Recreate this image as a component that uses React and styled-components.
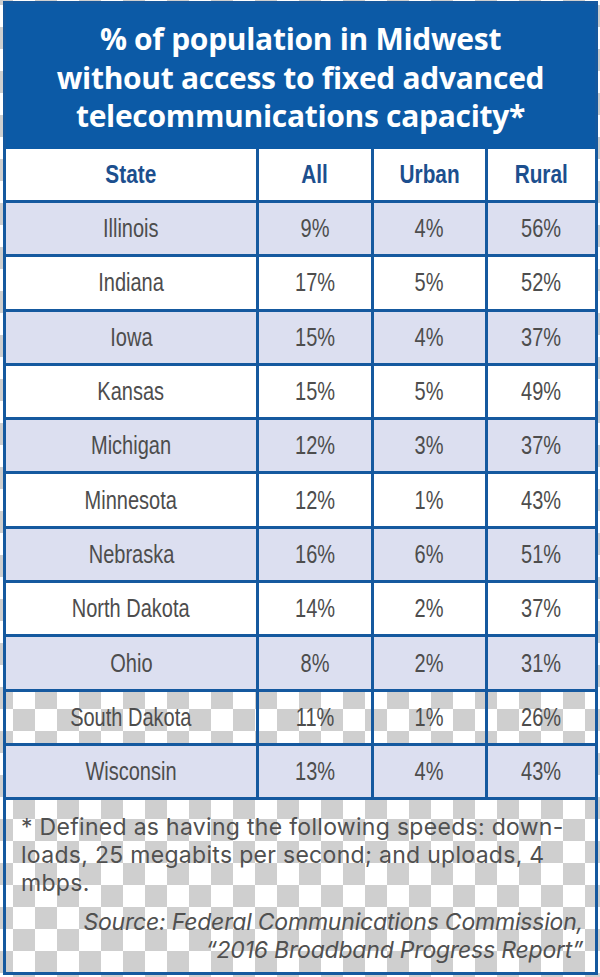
import React from 'react';
import styled, { createGlobalStyle, css } from 'styled-components';

/**************************************************
    DATA
**************************************************/
const rows = [
    { state: 'Illinois', all: '9%', urban: '4%', rural: '56%', tone: 'shade' },
    { state: 'Indiana', all: '17%', urban: '5%', rural: '52%', tone: 'plain' },
    { state: 'Iowa', all: '15%', urban: '4%', rural: '37%', tone: 'shade' },
    { state: 'Kansas', all: '15%', urban: '5%', rural: '49%', tone: 'plain' },
    { state: 'Michigan', all: '12%', urban: '3%', rural: '37%', tone: 'shade' },
    { state: 'Minnesota', all: '12%', urban: '1%', rural: '43%', tone: 'plain' },
    { state: 'Nebraska', all: '16%', urban: '6%', rural: '51%', tone: 'shade' },
    { state: 'North Dakota', all: '14%', urban: '2%', rural: '37%', tone: 'plain' },
    { state: 'Ohio', all: '8%', urban: '2%', rural: '31%', tone: 'shade' },
    { state: 'South Dakota', all: '11%', urban: '1%', rural: '26%', tone: 'clear' },
    { state: 'Wisconsin', all: '13%', urban: '4%', rural: '43%', tone: 'shade' },
];

const LINE = '#15599f';

/**************************************************
    APP
**************************************************/
export default function App() {
    return (
        <>
            <GlobalStyle />
            <Card>
                <Title>
                    % of population in Midwest<br />
                    without access to fixed advanced<br />
                    telecommunications capacity*
                </Title>
                <Row tone="plain">
                    <HeadCell><Label>State</Label></HeadCell>
                    <HeadCell><Label>All</Label></HeadCell>
                    <HeadCell><Label>Urban</Label></HeadCell>
                    <HeadCell><Label>Rural</Label></HeadCell>
                </Row>
                {rows.map(r => (
                    <Row key={r.state} tone={r.tone} $ruled>
                        <Cell><Label>{r.state}</Label></Cell>
                        <Cell><Label>{r.all}</Label></Cell>
                        <Cell><Label>{r.urban}</Label></Cell>
                        <Cell><Label>{r.rural}</Label></Cell>
                    </Row>
                ))}
                <Footer>
                    <Note>
                        * Defined as having the following speeds: down-<br />
                        loads, 25 megabits per second; and uploads, 4<br />
                        mbps.
                    </Note>
                    <Source>
                        Source: Federal Communications Commission,<br />
                        “2016 Broadband Progress Report”
                    </Source>
                </Footer>
            </Card>
        </>
    );
}

/**************************************************
    STYLES
**************************************************/
const GlobalStyle = createGlobalStyle`
    html {
        background-color: #ffffff;
        background-image: conic-gradient(#ffffff 25%, #cfcfcf 0 50%, #ffffff 0 75%, #cfcfcf 0);
        background-size: 44px 44px;
        background-position: 13px 5px;
        min-height: 977px;
    }
    body {
        margin: 0;
        font-family: "Open Sans", "Liberation Sans", sans-serif;
    }
`;

const Card = styled.div`
    width: 595px;
    margin: 1px 0 0 3px;
    border: 3px solid ${LINE};
    box-sizing: border-box;
`;

const Title = styled.h1`
    margin: 0;
    height: 145px;
    box-sizing: border-box;
    padding-top: 16px;
    background: #0c5aa6;
    color: #ffffff;
    font-family: "Open Sans", sans-serif;
    font-weight: 700;
    font-size: 30px;
    line-height: 38.5px;
    text-align: center;
    letter-spacing: -0.3px;
`;

const tones = {
    shade: '#dcdff0',
    plain: '#ffffff',
    clear: 'transparent',
};

const Row = styled.div`
    display: grid;
    grid-template-columns: 250px 115px 114px 1fr;
    height: ${p => (p.$ruled ? '54.3px' : '51px')};
    box-sizing: border-box;
    background: ${p => tones[p.tone]};
    ${p => p.$ruled && css`
        border-top: 3px solid ${LINE};
    `}
`;

const Cell = styled.div`
    display: flex;
    align-items: center;
    justify-content: center;
    font-family: "Liberation Sans", Arial, sans-serif;
    font-size: 25px;
    color: #4d4d4d;

    & + & {
        border-left: 3px solid ${LINE};
    }
`;

const HeadCell = styled(Cell)`
    font-weight: 700;
    font-size: 26px;
    color: #1c4f8e;
`;

// condensed face: squeeze the sans horizontally
const Label = styled.span`
    display: inline-block;
    white-space: nowrap;
    transform: scaleX(0.8);
`;

const Footer = styled.div`
    border-top: 3px solid ${LINE};
    height: 175px;
    box-sizing: border-box;
    padding: 13px 12px 0 15px;
    color: #505050;
    font-family: Inter, "Open Sans", sans-serif;
    font-size: 23px;
    line-height: 28px;
`;

const Note = styled.p`
    margin: 0;
    letter-spacing: 0.3px;
`;

const Source = styled.p`
    margin: 11px 0 0;
    font-style: italic;
    text-align: right;
    letter-spacing: -0.2px;
`;
